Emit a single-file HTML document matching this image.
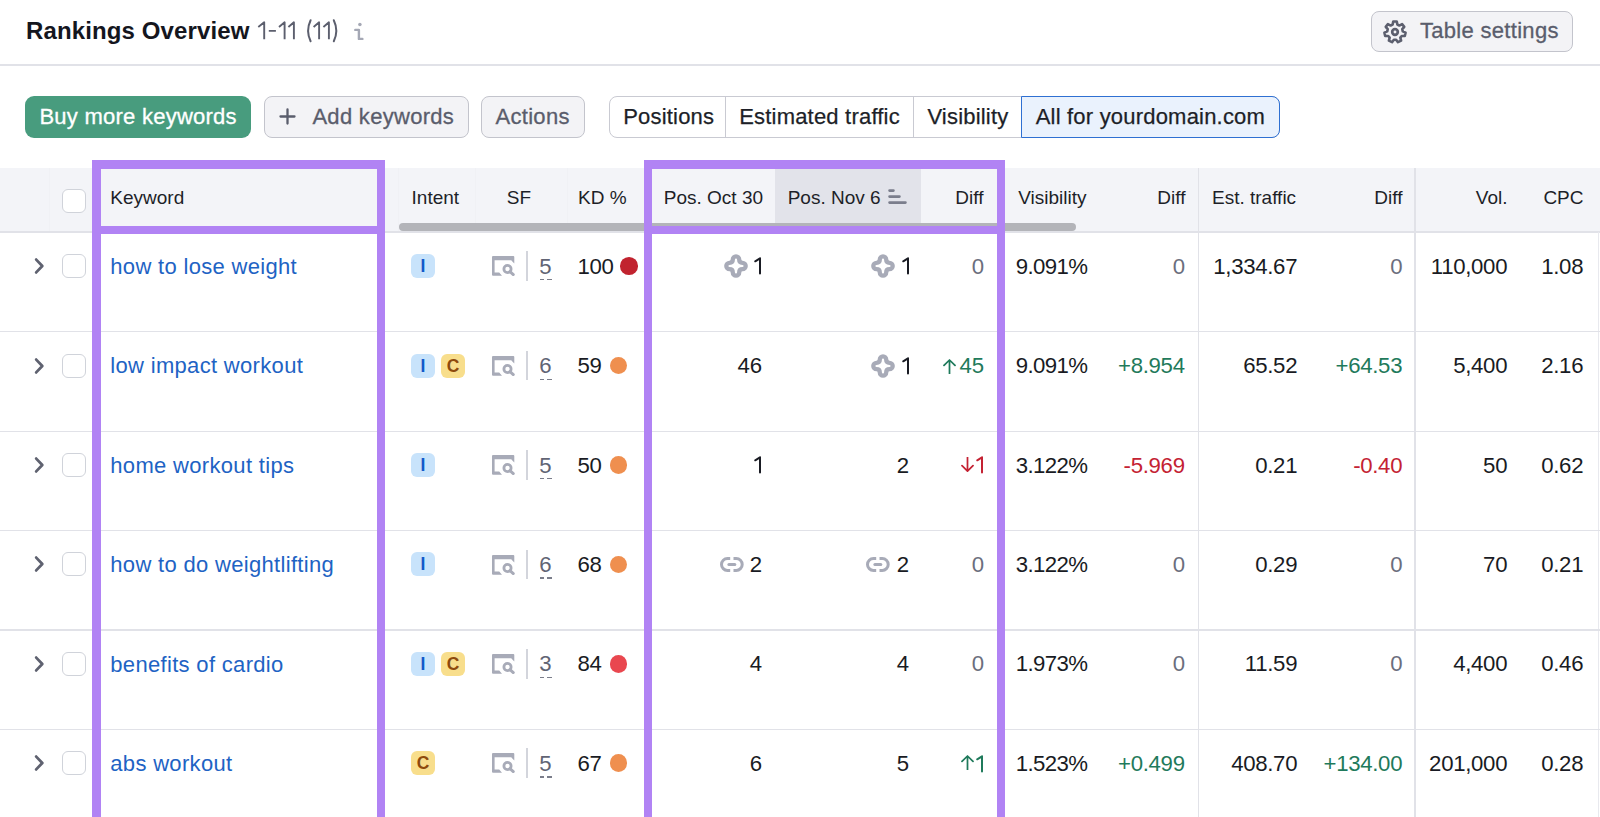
<!DOCTYPE html><html><head><meta charset="utf-8"><style>
*{margin:0;padding:0;box-sizing:border-box}
html,body{width:1600px;height:817px;overflow:hidden;background:#fff}
body{position:relative;font-family:"Liberation Sans",sans-serif;color:#171a22}
.a{position:absolute}
.t{position:absolute;white-space:nowrap;line-height:1}
.r{text-align:right}
.hd{font-size:19px;color:#1d1f28}
.d{font-size:22.2px;color:#191b23;letter-spacing:-0.3px}
.kw{font-size:22px;color:#1e63c4}
.z{color:#6b6e7d}
.g{color:#1f7a5b}
.rd{color:#c42233}
.btn{position:absolute;border:1.5px solid #c3c4cc;background:#f3f3f6;border-radius:8px}
.badge{position:absolute;width:24px;height:24px;border-radius:6px;font-weight:bold;font-size:17.5px;line-height:25px;text-align:center}
.bI{background:#c8e3fb;color:#1259c9}
.bC{background:#f8de8c;color:#8e4a0c}
.cb{position:absolute;width:24px;height:24px;border:1.7px solid #d0d3da;border-radius:6px;background:#fff}
.vl{position:absolute;width:1.3px;background:#e1e2e8}
.hl{position:absolute;height:1.3px;background:#e1e2e8;left:0;width:1600px}
.pp{position:absolute;background:#b183f4}
</style></head><body>
<div class="t " style="left:26.0px;top:19.3px;font-size:24px;font-weight:bold;color:#14161e;letter-spacing:0.12px">Rankings Overview</div>
<svg class="a" style="left:250px;top:10px" width="130" height="45" viewBox="250 10 130 45"><path d="M258.3 26.9 L264.2 22.3 V39.3 M268.8 30.9H275.9 M279.0 26.9 L284.6 22.3 V39.3 M288.4 26.9 L293.9 22.3 V39.3 M313.6 26.9 L319.1 22.3 V39.3 M323.4 26.9 L328.9 22.3 V39.3" fill="none" stroke="#5c5f6e" stroke-width="1.9" stroke-linejoin="round"/><path d="M310.6 20.2Q305.6 30.7 310.6 41.3M333.8 20.2Q338.8 30.7 333.8 41.3" fill="none" stroke="#5c5f6e" stroke-width="2" stroke-linecap="round"/><circle cx="359.9" cy="24.4" r="1.75" fill="#a5a8b5"/><path d="M355.3 29.9H358.9V38.9H362.4" fill="none" stroke="#a5a8b5" stroke-width="2.4" stroke-linecap="round" stroke-linejoin="round"/></svg>
<div class="btn" style="left:1371px;top:10.5px;width:201.5px;height:41px"></div>
<div class="t " style="left:1420.0px;top:20.3px;font-size:22px;color:#5a5d6c;letter-spacing:0.3px;-webkit-text-stroke:0.3px #5a5d6c">Table settings</div>
<svg class="a" style="left:1382.8px;top:19.6px" width="24" height="24" viewBox="0 0 24 24" overflow="visible"><path fill="none" stroke="#5c5f6e" stroke-width="2.6" stroke-linejoin="round" d="M10.25 1.55 L13.75 1.55 L14.35 4.56 L16.35 5.53 L19.08 4.11 L21.26 6.85 L19.28 9.20 L19.77 11.37 L22.58 12.62 L21.80 16.03 L18.73 15.94 L17.34 17.68 L18.11 20.66 L14.96 22.18 L13.11 19.72 L10.89 19.72 L9.04 22.18 L5.89 20.66 L6.66 17.68 L5.27 15.94 L2.20 16.03 L1.42 12.62 L4.23 11.37 L4.72 9.20 L2.74 6.85 L4.92 4.11 L7.65 5.53 L9.65 4.56Z"/><circle cx="12" cy="12" r="2.8" fill="none" stroke="#5c5f6e" stroke-width="2.7"/></svg>
<div class="a" style="left:0;top:64px;width:1600px;height:1.5px;background:#e1e2e8"></div>
<div class="a" style="left:25.3px;top:96.3px;width:226px;height:42px;background:#489c7e;border-radius:9px"></div>
<div class="t " style="left:39.4px;top:106.2px;font-size:22px;color:#fff;letter-spacing:0.25px;-webkit-text-stroke:0.3px #fff">Buy more keywords</div>
<div class="btn" style="left:263.6px;top:96.3px;width:205px;height:41.7px"></div>
<svg class="a" style="left:279px;top:108px" width="17" height="17" viewBox="0 0 17 17"><path d="M8.5 1.5V15.5M1.5 8.5H15.5" stroke="#5a5d6c" stroke-width="2.3" stroke-linecap="round"/></svg>
<div class="t " style="left:312.4px;top:106.2px;font-size:22px;color:#5a5d6c;letter-spacing:0.3px;-webkit-text-stroke:0.3px #5a5d6c">Add keywords</div>
<div class="btn" style="left:481.4px;top:96.3px;width:103.6px;height:41.7px"></div>
<div class="t " style="left:495.5px;top:106.2px;font-size:22px;color:#5a5d6c;letter-spacing:0.3px;-webkit-text-stroke:0.3px #5a5d6c">Actions</div>
<div class="a" style="left:609px;top:96.3px;width:671px;height:41.4px;border:1.3px solid #c9cad2;border-radius:8px;background:#fff"></div>
<div class="a" style="left:725.2px;top:96.3px;width:1.3px;height:41.4px;background:#c9cad2"></div>
<div class="a" style="left:913.2px;top:96.3px;width:1.3px;height:41.4px;background:#c9cad2"></div>
<div class="a" style="left:1021.2px;top:96.3px;width:258.5px;height:41.4px;border:1.9px solid #2f70d2;border-radius:0 8px 8px 0;background:#eaf2fd"></div>
<div class="t " style="left:623.2px;top:106.2px;font-size:22px;color:#1d1f28;letter-spacing:0.2px;-webkit-text-stroke:0.25px #1d1f28">Positions</div>
<div class="t " style="left:739.2px;top:106.2px;font-size:22px;color:#1d1f28;letter-spacing:0.2px;-webkit-text-stroke:0.25px #1d1f28">Estimated traffic</div>
<div class="t " style="left:927.4px;top:106.2px;font-size:22px;color:#1d1f28;letter-spacing:0.2px;-webkit-text-stroke:0.25px #1d1f28">Visibility</div>
<div class="t " style="left:1035.7px;top:106.2px;font-size:22px;color:#1d1f28;letter-spacing:0.2px;-webkit-text-stroke:0.25px #1d1f28">All for yourdomain.com</div>
<div class="a" style="left:0;top:168.2px;width:1600px;height:63.5px;background:#f3f4f8"></div>
<div class="a" style="left:775px;top:168.2px;width:146px;height:63.5px;background:#e2e3ea"></div>
<div class="a" style="left:0;top:231.2px;width:1600px;height:1.8px;background:#e1e2e8"></div>
<div class="a" style="left:49px;top:168px;width:1px;height:63px;background:#f0f1f5"></div>
<div class="a" style="left:398px;top:168px;width:1px;height:63px;background:#f0f1f5"></div>
<div class="a" style="left:475px;top:168px;width:1px;height:63px;background:#f0f1f5"></div>
<div class="a" style="left:567px;top:168px;width:1px;height:63px;background:#f0f1f5"></div>
<div class="a" style="left:1198px;top:168px;width:1.3px;height:649px;background:#e1e2e8"></div>
<div class="a" style="left:1414.4px;top:168px;width:1.3px;height:649px;background:#e1e2e8"></div>
<div class="a" style="left:1597.8px;top:232px;width:1.3px;height:585px;background:#e8e9ee"></div>
<div class="a" style="left:399px;top:222.8px;width:677px;height:8.5px;background:#b3b4b9;border-radius:5px"></div>
<div class="cb" style="left:62px;top:189.4px"></div>
<div class="t hd" style="left:110.3px;top:188.1px;">Keyword</div>
<div class="t hd" style="left:411.6px;top:188.1px;">Intent</div>
<div class="t r hd" style="right:1069.0px;top:188.1px;">SF</div>
<div class="t hd" style="left:578.0px;top:188.1px;">KD %</div>
<div class="t hd" style="left:663.8px;top:188.1px;">Pos. Oct 30</div>
<div class="t hd" style="left:787.7px;top:188.1px;">Pos. Nov 6</div>
<svg class="a" style="left:886px;top:187px" width="22" height="20" viewBox="0 0 22 20"><path d="M3.6 3.6H7.4M3.6 9.6H13.4M3.6 15.6H19.4" stroke="#7b7e8c" stroke-width="2.8" stroke-linecap="round"/></svg>
<div class="t r hd" style="right:616.5px;top:188.1px;">Diff</div>
<div class="t hd" style="left:1018.2px;top:188.1px;">Visibility</div>
<div class="t r hd" style="right:414.5px;top:188.1px;">Diff</div>
<div class="t hd" style="left:1212.0px;top:188.1px;">Est. traffic</div>
<div class="t r hd" style="right:197.5px;top:188.1px;">Diff</div>
<div class="t r hd" style="right:92.5px;top:188.1px;">Vol.</div>
<div class="t r hd" style="right:16.5px;top:188.1px;">CPC</div>
<div class="a" style="left:0;top:331.0px;width:1600px;height:1.4px;background:#e1e2e8"></div>
<svg class="a" style="left:32px;top:256.0px" width="14" height="20" viewBox="0 0 14 20"><path d="M4.2 3.6 10.3 10 4.2 16.4" fill="none" stroke="#5f6270" stroke-width="2.8" stroke-linecap="round" stroke-linejoin="round"/></svg>
<div class="cb" style="left:62px;top:254.0px"></div>
<div class="t kw" style="left:110.3px;top:255.7px;letter-spacing:0.32px">how to lose weight</div>
<div class="badge bI" style="left:411px;top:254.0px">I</div>
<div class="a" style="left:491.6px;top:256.1px;line-height:0"><svg width="23" height="20" viewBox="0 0 23 20"><path fill="#a8abb8" d="M1 0H21.3A1 1 0 0 1 22.3 1V7.6L19.4 4.6V4.3H2.6V16.6H7.2L10 19.7H1A1 1 0 0 1 0 18.7V1A1 1 0 0 1 1 0Z"/><circle cx="15.5" cy="13" r="3.6" fill="none" stroke="#a8abb8" stroke-width="2.8"/><path d="M18 15.6 21.3 18.6" stroke="#a8abb8" stroke-width="2.9" stroke-linecap="round"/></svg></div>
<div class="a" style="left:526px;top:251.1px;width:1.7px;height:29.7px;background:#d3d5dc"></div>
<div class="t r d" style="right:1048.8px;top:255.6px;color:#616474">5</div>
<div class="a" style="left:539.6px;top:279.0px;width:4.4px;height:1.4px;background:#7a7d8a"></div>
<div class="a" style="left:547px;top:279.0px;width:4.5px;height:1.4px;background:#7a7d8a"></div>
<div class="t d" style="left:577.5px;top:255.6px">100</div>
<div class="a" style="left:620px;top:257.1px;width:17.7px;height:17.7px;border-radius:50%;background:#c1232f"></div>
<svg class="a" style="left:752.90px;top:256.30px" width="10" height="20" viewBox="0 0 10 20"><path d="M2.2 5.3Q4.6 3.9 7 2.2V17.5" fill="none" stroke="#191b23" stroke-width="2" stroke-linecap="round" stroke-linejoin="round"/></svg>
<svg class="a" style="left:724px;top:254.0px" width="24" height="24" viewBox="0 0 24 24"><path d="M8.80 5.50A3.2 3.2 0 0 1 15.20 5.50Q15.20 8.80 18.50 8.80A3.2 3.2 0 0 1 18.50 15.20Q15.20 15.20 15.20 18.50A3.2 3.2 0 0 1 8.80 18.50Q8.80 15.20 5.50 15.20A3.2 3.2 0 0 1 5.50 8.80Q8.80 8.80 8.80 5.50Z" fill="none" stroke="#a8abb8" stroke-width="4.3"/></svg>
<svg class="a" style="left:901.40px;top:256.30px" width="10" height="20" viewBox="0 0 10 20"><path d="M2.2 5.3Q4.6 3.9 7 2.2V17.5" fill="none" stroke="#191b23" stroke-width="2" stroke-linecap="round" stroke-linejoin="round"/></svg>
<svg class="a" style="left:871px;top:254.0px" width="24" height="24" viewBox="0 0 24 24"><path d="M8.80 5.50A3.2 3.2 0 0 1 15.20 5.50Q15.20 8.80 18.50 8.80A3.2 3.2 0 0 1 18.50 15.20Q15.20 15.20 15.20 18.50A3.2 3.2 0 0 1 8.80 18.50Q8.80 15.20 5.50 15.20A3.2 3.2 0 0 1 5.50 8.80Q8.80 8.80 8.80 5.50Z" fill="none" stroke="#a8abb8" stroke-width="4.3"/></svg>
<div class="t r d z" style="right:616.3px;top:255.6px;">0</div>
<div class="t d" style="left:1015.7px;top:255.6px;letter-spacing:-0.6px">9.091%</div>
<div class="t r d z" style="right:415.3px;top:255.6px;">0</div>
<div class="t r d" style="right:302.8px;top:255.6px;">1,334.67</div>
<div class="t r d z" style="right:197.8px;top:255.6px;">0</div>
<div class="t r d" style="right:92.8px;top:255.6px;">110,000</div>
<div class="t r d" style="right:16.8px;top:255.6px;">1.08</div>
<div class="a" style="left:0;top:430.5px;width:1600px;height:1.4px;background:#e1e2e8"></div>
<svg class="a" style="left:32px;top:355.5px" width="14" height="20" viewBox="0 0 14 20"><path d="M4.2 3.6 10.3 10 4.2 16.4" fill="none" stroke="#5f6270" stroke-width="2.8" stroke-linecap="round" stroke-linejoin="round"/></svg>
<div class="cb" style="left:62px;top:353.5px"></div>
<div class="t kw" style="left:110.3px;top:355.2px;letter-spacing:0.32px">low impact workout</div>
<div class="badge bI" style="left:411px;top:353.5px">I</div>
<div class="badge bC" style="left:441px;top:353.5px">C</div>
<div class="a" style="left:491.6px;top:355.6px;line-height:0"><svg width="23" height="20" viewBox="0 0 23 20"><path fill="#a8abb8" d="M1 0H21.3A1 1 0 0 1 22.3 1V7.6L19.4 4.6V4.3H2.6V16.6H7.2L10 19.7H1A1 1 0 0 1 0 18.7V1A1 1 0 0 1 1 0Z"/><circle cx="15.5" cy="13" r="3.6" fill="none" stroke="#a8abb8" stroke-width="2.8"/><path d="M18 15.6 21.3 18.6" stroke="#a8abb8" stroke-width="2.9" stroke-linecap="round"/></svg></div>
<div class="a" style="left:526px;top:350.6px;width:1.7px;height:29.7px;background:#d3d5dc"></div>
<div class="t r d" style="right:1048.8px;top:355.1px;color:#616474">6</div>
<div class="a" style="left:539.6px;top:378.5px;width:4.4px;height:1.4px;background:#7a7d8a"></div>
<div class="a" style="left:547px;top:378.5px;width:4.5px;height:1.4px;background:#7a7d8a"></div>
<div class="t d" style="left:577.5px;top:355.1px">59</div>
<div class="a" style="left:609.8px;top:356.6px;width:17.7px;height:17.7px;border-radius:50%;background:#ef8f4f"></div>
<div class="t r d" style="right:838.3px;top:355.1px;">46</div>
<svg class="a" style="left:901.40px;top:355.76px" width="10" height="20" viewBox="0 0 10 20"><path d="M2.2 5.3Q4.6 3.9 7 2.2V17.5" fill="none" stroke="#191b23" stroke-width="2" stroke-linecap="round" stroke-linejoin="round"/></svg>
<svg class="a" style="left:871px;top:353.5px" width="24" height="24" viewBox="0 0 24 24"><path d="M8.80 5.50A3.2 3.2 0 0 1 15.20 5.50Q15.20 8.80 18.50 8.80A3.2 3.2 0 0 1 18.50 15.20Q15.20 15.20 15.20 18.50A3.2 3.2 0 0 1 8.80 18.50Q8.80 15.20 5.50 15.20A3.2 3.2 0 0 1 5.50 8.80Q8.80 8.80 8.80 5.50Z" fill="none" stroke="#a8abb8" stroke-width="4.3"/></svg>
<div class="t r d g" style="right:616.3px;top:355.1px;"><svg width="13" height="15.2" viewBox="0 0 13 15.2" style="margin-right:3.4px;vertical-align:-0.8px"><path d="M6.5 15.1V1.2M1 6.4 6.5 1 12 6.4" fill="none" stroke="#1f7a5b" stroke-width="1.75" stroke-linecap="round" stroke-linejoin="round"/></svg>45</div>
<div class="t d" style="left:1015.7px;top:355.1px;letter-spacing:-0.6px">9.091%</div>
<div class="t r d g" style="right:415.3px;top:355.1px;">+8.954</div>
<div class="t r d" style="right:302.8px;top:355.1px;">65.52</div>
<div class="t r d g" style="right:197.8px;top:355.1px;">+64.53</div>
<div class="t r d" style="right:92.8px;top:355.1px;">5,400</div>
<div class="t r d" style="right:16.8px;top:355.1px;">2.16</div>
<div class="a" style="left:0;top:529.9px;width:1600px;height:1.4px;background:#e1e2e8"></div>
<svg class="a" style="left:32px;top:454.9px" width="14" height="20" viewBox="0 0 14 20"><path d="M4.2 3.6 10.3 10 4.2 16.4" fill="none" stroke="#5f6270" stroke-width="2.8" stroke-linecap="round" stroke-linejoin="round"/></svg>
<div class="cb" style="left:62px;top:452.9px"></div>
<div class="t kw" style="left:110.3px;top:454.6px;letter-spacing:0.32px">home workout tips</div>
<div class="badge bI" style="left:411px;top:452.9px">I</div>
<div class="a" style="left:491.6px;top:455.0px;line-height:0"><svg width="23" height="20" viewBox="0 0 23 20"><path fill="#a8abb8" d="M1 0H21.3A1 1 0 0 1 22.3 1V7.6L19.4 4.6V4.3H2.6V16.6H7.2L10 19.7H1A1 1 0 0 1 0 18.7V1A1 1 0 0 1 1 0Z"/><circle cx="15.5" cy="13" r="3.6" fill="none" stroke="#a8abb8" stroke-width="2.8"/><path d="M18 15.6 21.3 18.6" stroke="#a8abb8" stroke-width="2.9" stroke-linecap="round"/></svg></div>
<div class="a" style="left:526px;top:450.0px;width:1.7px;height:29.7px;background:#d3d5dc"></div>
<div class="t r d" style="right:1048.8px;top:454.5px;color:#616474">5</div>
<div class="a" style="left:539.6px;top:477.9px;width:4.4px;height:1.4px;background:#7a7d8a"></div>
<div class="a" style="left:547px;top:477.9px;width:4.5px;height:1.4px;background:#7a7d8a"></div>
<div class="t d" style="left:577.5px;top:454.5px">50</div>
<div class="a" style="left:609.8px;top:456.0px;width:17.7px;height:17.7px;border-radius:50%;background:#ef8f4f"></div>
<svg class="a" style="left:752.90px;top:455.22px" width="10" height="20" viewBox="0 0 10 20"><path d="M2.2 5.3Q4.6 3.9 7 2.2V17.5" fill="none" stroke="#191b23" stroke-width="2" stroke-linecap="round" stroke-linejoin="round"/></svg>
<div class="t r d" style="right:691.3px;top:454.5px;">2</div>
<svg class="a" style="left:960.50px;top:456.82px" width="13" height="15.2" viewBox="0 0 13 15.2"><path d="M6.5 0V13.9M1 8.7 6.5 14.1 12 8.7" fill="none" stroke="#c42233" stroke-width="1.75" stroke-linecap="round" stroke-linejoin="round"/></svg>
<svg class="a" style="left:974.80px;top:455.22px" width="10" height="20" viewBox="0 0 10 20"><path d="M2.2 5.3Q4.6 3.9 7 2.2V17.5" fill="none" stroke="#c42233" stroke-width="2" stroke-linecap="round" stroke-linejoin="round"/></svg>
<div class="t d" style="left:1015.7px;top:454.5px;letter-spacing:-0.6px">3.122%</div>
<div class="t r d rd" style="right:415.3px;top:454.5px;">-5.969</div>
<div class="t r d" style="right:302.8px;top:454.5px;">0.21</div>
<div class="t r d rd" style="right:197.8px;top:454.5px;">-0.40</div>
<div class="t r d" style="right:92.8px;top:454.5px;">50</div>
<div class="t r d" style="right:16.8px;top:454.5px;">0.62</div>
<div class="a" style="left:0;top:629.4px;width:1600px;height:1.4px;background:#e1e2e8"></div>
<svg class="a" style="left:32px;top:554.4px" width="14" height="20" viewBox="0 0 14 20"><path d="M4.2 3.6 10.3 10 4.2 16.4" fill="none" stroke="#5f6270" stroke-width="2.8" stroke-linecap="round" stroke-linejoin="round"/></svg>
<div class="cb" style="left:62px;top:552.4px"></div>
<div class="t kw" style="left:110.3px;top:554.1px;letter-spacing:0.32px">how to do weightlifting</div>
<div class="badge bI" style="left:411px;top:552.4px">I</div>
<div class="a" style="left:491.6px;top:554.5px;line-height:0"><svg width="23" height="20" viewBox="0 0 23 20"><path fill="#a8abb8" d="M1 0H21.3A1 1 0 0 1 22.3 1V7.6L19.4 4.6V4.3H2.6V16.6H7.2L10 19.7H1A1 1 0 0 1 0 18.7V1A1 1 0 0 1 1 0Z"/><circle cx="15.5" cy="13" r="3.6" fill="none" stroke="#a8abb8" stroke-width="2.8"/><path d="M18 15.6 21.3 18.6" stroke="#a8abb8" stroke-width="2.9" stroke-linecap="round"/></svg></div>
<div class="a" style="left:526px;top:549.5px;width:1.7px;height:29.7px;background:#d3d5dc"></div>
<div class="t r d" style="right:1048.8px;top:554.0px;color:#616474">6</div>
<div class="a" style="left:539.6px;top:577.4px;width:4.4px;height:1.4px;background:#7a7d8a"></div>
<div class="a" style="left:547px;top:577.4px;width:4.5px;height:1.4px;background:#7a7d8a"></div>
<div class="t d" style="left:577.5px;top:554.0px">68</div>
<div class="a" style="left:609.8px;top:555.5px;width:17.7px;height:17.7px;border-radius:50%;background:#ef8f4f"></div>
<div class="t r d" style="right:838.3px;top:554.0px;">2</div>
<svg class="a" style="left:719.6px;top:556.8px" width="24" height="15" viewBox="0 0 24 15"><path d="M10.2 1.5H7.45A5.95 5.95 0 0 0 7.45 13.4H10.2M13.5 1.5H16.25A5.95 5.95 0 0 1 16.25 13.4H13.5" fill="none" stroke="#a8abb8" stroke-width="3"/><path d="M8.9 7.45H14.8" stroke="#a8abb8" stroke-width="3" stroke-linecap="round"/></svg>
<div class="t r d" style="right:691.3px;top:554.0px;">2</div>
<svg class="a" style="left:866.2px;top:556.8px" width="24" height="15" viewBox="0 0 24 15"><path d="M10.2 1.5H7.45A5.95 5.95 0 0 0 7.45 13.4H10.2M13.5 1.5H16.25A5.95 5.95 0 0 1 16.25 13.4H13.5" fill="none" stroke="#a8abb8" stroke-width="3"/><path d="M8.9 7.45H14.8" stroke="#a8abb8" stroke-width="3" stroke-linecap="round"/></svg>
<div class="t r d z" style="right:616.3px;top:554.0px;">0</div>
<div class="t d" style="left:1015.7px;top:554.0px;letter-spacing:-0.6px">3.122%</div>
<div class="t r d z" style="right:415.3px;top:554.0px;">0</div>
<div class="t r d" style="right:302.8px;top:554.0px;">0.29</div>
<div class="t r d z" style="right:197.8px;top:554.0px;">0</div>
<div class="t r d" style="right:92.8px;top:554.0px;">70</div>
<div class="t r d" style="right:16.8px;top:554.0px;">0.21</div>
<div class="a" style="left:0;top:728.8px;width:1600px;height:1.4px;background:#e1e2e8"></div>
<svg class="a" style="left:32px;top:653.8px" width="14" height="20" viewBox="0 0 14 20"><path d="M4.2 3.6 10.3 10 4.2 16.4" fill="none" stroke="#5f6270" stroke-width="2.8" stroke-linecap="round" stroke-linejoin="round"/></svg>
<div class="cb" style="left:62px;top:651.8px"></div>
<div class="t kw" style="left:110.3px;top:653.5px;letter-spacing:0.32px">benefits of cardio</div>
<div class="badge bI" style="left:411px;top:651.8px">I</div>
<div class="badge bC" style="left:441px;top:651.8px">C</div>
<div class="a" style="left:491.6px;top:653.9px;line-height:0"><svg width="23" height="20" viewBox="0 0 23 20"><path fill="#a8abb8" d="M1 0H21.3A1 1 0 0 1 22.3 1V7.6L19.4 4.6V4.3H2.6V16.6H7.2L10 19.7H1A1 1 0 0 1 0 18.7V1A1 1 0 0 1 1 0Z"/><circle cx="15.5" cy="13" r="3.6" fill="none" stroke="#a8abb8" stroke-width="2.8"/><path d="M18 15.6 21.3 18.6" stroke="#a8abb8" stroke-width="2.9" stroke-linecap="round"/></svg></div>
<div class="a" style="left:526px;top:648.9px;width:1.7px;height:29.7px;background:#d3d5dc"></div>
<div class="t r d" style="right:1048.8px;top:653.4px;color:#616474">3</div>
<div class="a" style="left:539.6px;top:676.8px;width:4.4px;height:1.4px;background:#7a7d8a"></div>
<div class="a" style="left:547px;top:676.8px;width:4.5px;height:1.4px;background:#7a7d8a"></div>
<div class="t d" style="left:577.5px;top:653.4px">84</div>
<div class="a" style="left:609.8px;top:654.9px;width:17.7px;height:17.7px;border-radius:50%;background:#e9474f"></div>
<div class="t r d" style="right:838.3px;top:653.4px;">4</div>
<div class="t r d" style="right:691.3px;top:653.4px;">4</div>
<div class="t r d z" style="right:616.3px;top:653.4px;">0</div>
<div class="t d" style="left:1015.7px;top:653.4px;letter-spacing:-0.6px">1.973%</div>
<div class="t r d z" style="right:415.3px;top:653.4px;">0</div>
<div class="t r d" style="right:302.8px;top:653.4px;">11.59</div>
<div class="t r d z" style="right:197.8px;top:653.4px;">0</div>
<div class="t r d" style="right:92.8px;top:653.4px;">4,400</div>
<div class="t r d" style="right:16.8px;top:653.4px;">0.46</div>
<svg class="a" style="left:32px;top:753.3px" width="14" height="20" viewBox="0 0 14 20"><path d="M4.2 3.6 10.3 10 4.2 16.4" fill="none" stroke="#5f6270" stroke-width="2.8" stroke-linecap="round" stroke-linejoin="round"/></svg>
<div class="cb" style="left:62px;top:751.3px"></div>
<div class="t kw" style="left:110.3px;top:753.0px;letter-spacing:0.32px">abs workout</div>
<div class="badge bC" style="left:411px;top:751.3px">C</div>
<div class="a" style="left:491.6px;top:753.4px;line-height:0"><svg width="23" height="20" viewBox="0 0 23 20"><path fill="#a8abb8" d="M1 0H21.3A1 1 0 0 1 22.3 1V7.6L19.4 4.6V4.3H2.6V16.6H7.2L10 19.7H1A1 1 0 0 1 0 18.7V1A1 1 0 0 1 1 0Z"/><circle cx="15.5" cy="13" r="3.6" fill="none" stroke="#a8abb8" stroke-width="2.8"/><path d="M18 15.6 21.3 18.6" stroke="#a8abb8" stroke-width="2.9" stroke-linecap="round"/></svg></div>
<div class="a" style="left:526px;top:748.4px;width:1.7px;height:29.7px;background:#d3d5dc"></div>
<div class="t r d" style="right:1048.8px;top:752.9px;color:#616474">5</div>
<div class="a" style="left:539.6px;top:776.3px;width:4.4px;height:1.4px;background:#7a7d8a"></div>
<div class="a" style="left:547px;top:776.3px;width:4.5px;height:1.4px;background:#7a7d8a"></div>
<div class="t d" style="left:577.5px;top:752.9px">67</div>
<div class="a" style="left:609.8px;top:754.4px;width:17.7px;height:17.7px;border-radius:50%;background:#ef8f4f"></div>
<div class="t r d" style="right:838.3px;top:752.9px;">6</div>
<div class="t r d" style="right:691.3px;top:752.9px;">5</div>
<svg class="a" style="left:960.50px;top:755.20px" width="13" height="15.2" viewBox="0 0 13 15.2"><path d="M6.5 15.1V1.2M1 6.4 6.5 1 12 6.4" fill="none" stroke="#1f7a5b" stroke-width="1.75" stroke-linecap="round" stroke-linejoin="round"/></svg>
<svg class="a" style="left:974.80px;top:753.60px" width="10" height="20" viewBox="0 0 10 20"><path d="M2.2 5.3Q4.6 3.9 7 2.2V17.5" fill="none" stroke="#1f7a5b" stroke-width="2" stroke-linecap="round" stroke-linejoin="round"/></svg>
<div class="t d" style="left:1015.7px;top:752.9px;letter-spacing:-0.6px">1.523%</div>
<div class="t r d g" style="right:415.3px;top:752.9px;">+0.499</div>
<div class="t r d" style="right:302.8px;top:752.9px;">408.70</div>
<div class="t r d g" style="right:197.8px;top:752.9px;">+134.00</div>
<div class="t r d" style="right:92.8px;top:752.9px;">201,000</div>
<div class="t r d" style="right:16.8px;top:752.9px;">0.28</div>
<div class="pp" style="left:92.2px;top:160.3px;width:293.3px;height:8.6px"></div>
<div class="pp" style="left:92.2px;top:160.3px;width:8.6px;height:656.7px"></div>
<div class="pp" style="left:376.9px;top:160.3px;width:8.6px;height:656.7px"></div>
<div class="pp" style="left:92.2px;top:226px;width:293.3px;height:8.4px"></div>
<div class="pp" style="left:643.6px;top:160.3px;width:361.69999999999993px;height:8.6px"></div>
<div class="pp" style="left:643.6px;top:160.3px;width:8.6px;height:656.7px"></div>
<div class="pp" style="left:996.6999999999999px;top:160.3px;width:8.6px;height:656.7px"></div>
<div class="pp" style="left:643.6px;top:226px;width:361.69999999999993px;height:8.4px"></div>
</body></html>
